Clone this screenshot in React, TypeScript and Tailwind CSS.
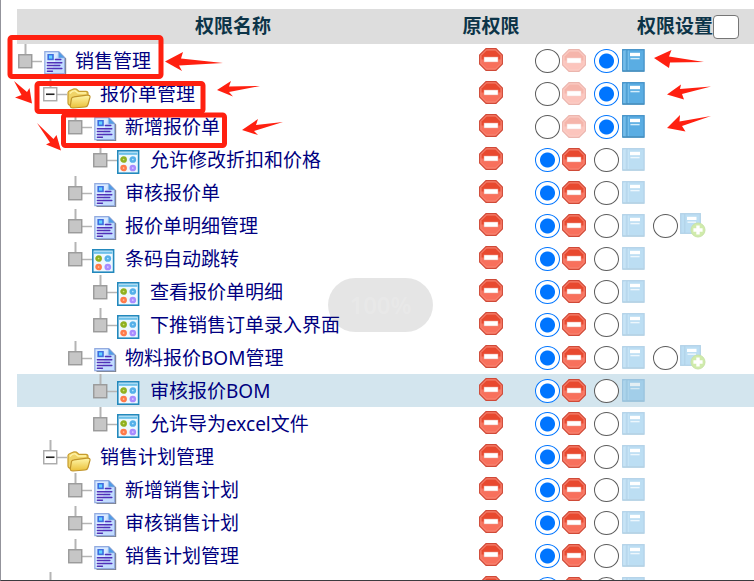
type IconKind = "doc" | "grid" | "folder";

type Permission = {
  id: number;
  level: 1 | 2 | 3 | 4;
  icon: IconKind;
  label: string;
  value: "deny" | "allow";
  canAdd?: boolean;
  active?: boolean;
};

const permissions: Permission[] = [
  { id: 1, level: 1, icon: "doc", label: "销售管理", value: "allow" },
  { id: 2, level: 2, icon: "folder", label: "报价单管理", value: "allow" },
  { id: 3, level: 3, icon: "doc", label: "新增报价单", value: "allow" },
  { id: 4, level: 4, icon: "grid", label: "允许修改折扣和价格", value: "deny" },
  { id: 5, level: 3, icon: "doc", label: "审核报价单", value: "deny" },
  { id: 6, level: 3, icon: "doc", label: "报价单明细管理", value: "deny", canAdd: true },
  { id: 7, level: 3, icon: "grid", label: "条码自动跳转", value: "deny" },
  { id: 8, level: 4, icon: "grid", label: "查看报价单明细", value: "deny" },
  { id: 9, level: 4, icon: "grid", label: "下推销售订单录入界面", value: "deny" },
  { id: 10, level: 3, icon: "doc", label: "物料报价BOM管理", value: "deny", canAdd: true },
  { id: 11, level: 4, icon: "grid", label: "审核报价BOM", value: "deny", active: true },
  { id: 12, level: 4, icon: "grid", label: "允许导为excel文件", value: "deny" },
  { id: 13, level: 2, icon: "folder", label: "销售计划管理", value: "deny" },
  { id: 14, level: 3, icon: "doc", label: "新增销售计划", value: "deny" },
  { id: 15, level: 3, icon: "doc", label: "审核销售计划", value: "deny" },
  { id: 16, level: 3, icon: "doc", label: "销售计划管理", value: "deny" },
  { id: 17, level: 2, icon: "folder", label: "", value: "deny" },
];

const indent = {
  1: "pl-0",
  2: "pl-[25px]",
  3: "pl-[50px]",
  4: "pl-[75px]",
};

const iconPadding = {
  doc: "pl-px pt-[7px]",
  grid: "pt-[7px]",
  folder: "pt-[11px]",
};

function Connector({ open }: { open: boolean }) {
  return (
    <svg width="25" height="33" viewBox="0 0 25 33" className="shrink-0">
      <path d="M8.5 0V10" stroke="#b4b4b4" strokeWidth="2" />
      <path d="M15 17.5H25" stroke="#b4b4b4" strokeWidth="1.5" />
      <rect
        x="1.75"
        y="10.75"
        width="13"
        height="13"
        fill={open ? "#ffffff" : "#c6c6c6"}
        stroke={open ? "#a9a9a9" : "#999999"}
        strokeWidth="1.4"
      />
      {open && <path d="M4 17.25H12.5" stroke="#222" strokeWidth="1.6" />}
    </svg>
  );
}

function DocIcon() {
  return (
    <svg width="24" height="24" viewBox="0 0 24 24">
      <path d="M3 1.5H17L23.2 7.5V24H3.5Z" fill="#7b7f88" />
      <path d="M1.8 .7H15.8L21.6 6.7V22.6H1.8Z" fill="#c2dcff" stroke="#93abe0" strokeWidth="1.2" />
      <path d="M2.8 1.7H15L8 22H2.8Z" fill="#e4f0ff" opacity=".7" />
      <path d="M15.8 1V6.7H21.4Z" fill="#4d9ce8" stroke="#7199d1" strokeWidth=".6" />
      <rect x="4.4" y="3" width="6.4" height="6.2" fill="#3d6de0" />
      <rect x="6" y="4.4" width="3.2" height="3.2" fill="#62d4ff" />
      <path
        d="M12.4 8.5H17.8M4.4 11.7H18.8M4.4 14.6H16.8M4.4 17.5H18.8M4.4 20.3H9.4"
        stroke="#5030b8"
        strokeWidth="1.5"
        strokeLinecap="round"
      />
    </svg>
  );
}

function GridIcon() {
  return (
    <svg width="23" height="24" viewBox="0 0 23 24">
      <rect x=".8" y=".8" width="20.8" height="22.4" fill="#edf8ff" stroke="#2389bd" strokeWidth="1.6" />
      <rect x="2" y="2" width="18.4" height="2.8" fill="#65bde9" />
      <path d="M2 2.6H20.4" stroke="#b9e4fa" strokeWidth=".9" />
      <g fill="none" strokeWidth="2.5">
        <circle cx="6.6" cy="9.5" r="2.1" stroke="#8fb020" fill="#d2e27c" />
        <circle cx="15.8" cy="9.5" r="2.1" stroke="#55b0e9" fill="#b9e4fd" />
        <circle cx="6.6" cy="18" r="2.1" stroke="#ff7a49" fill="#ffc9ae" />
        <circle cx="15.8" cy="18" r="2.1" stroke="#a98cff" fill="#dfd2ff" />
      </g>
    </svg>
  );
}

function FolderIcon() {
  return (
    <svg width="24" height="22" viewBox="0 0 24 22">
      <defs>
        <linearGradient id="folder" x1="0" y1="0" x2="0" y2="1">
          <stop offset="0" stopColor="#fff6a8" />
          <stop offset="1" stopColor="#eac038" />
        </linearGradient>
      </defs>
      <path
        d="M1 15V4.5Q1.2 3 3 2.5L6 1.2Q9 .4 10.5 2L12 3.4H19Q21 3.5 21 5.5V9L18 18H5Q1 17 1 15Z"
        fill="#f0d468"
        stroke="#c79c2c"
        strokeWidth="1.2"
      />
      <path d="M2.8 5.5Q5 2.6 8 2.6L11 5H19" fill="none" stroke="#fff3a6" strokeWidth="1.4" />
      <path
        d="M4.5 10.5Q4.8 9 7 8.8L20 7.2Q23.4 7 23 9.2L21 16.5Q20.4 18.8 18 19L6 20Q3 20 3.3 17.6Z"
        fill="url(#folder)"
        stroke="#c0942a"
        strokeWidth="1.2"
      />
    </svg>
  );
}

function StopIcon() {
  return (
    <svg width="24" height="23" viewBox="0 0 24 23" className="shrink-0">
      <path d="M7 .6H17L23.4 7V16L17 22.4H7L.6 16V7Z" fill="#f8705c" stroke="#cf4a38" strokeWidth="1.1" />
      <path d="M7.5 1.8H16.5L22.2 7.4V11.5H1.8V7.4Z" fill="#e8492f" />
      <path
        d="M7.5 2H16.5L22 7.5V15.5L16.5 21H7.5L2 15.5V7.5Z"
        fill="none"
        stroke="#f58a78"
        strokeWidth=".9"
      />
      <rect x="5" y="9" width="14" height="5" fill="#fff" stroke="#e99b8d" strokeWidth=".5" />
    </svg>
  );
}

function BookIcon() {
  return (
    <svg width="23" height="23" viewBox="0 0 23 23" className="shrink-0">
      <rect x=".7" y=".7" width="21.4" height="21.4" fill="#5aade3" stroke="#4593c8" strokeWidth="1.3" />
      <path d="M1.4 1.4H4.8V21.6H1.4Z" fill="#68b4e4" />
      <path d="M5 1V22" stroke="#3d8dc3" strokeWidth="1" />
      <path d="M6.2 1.5V21M2 2V21" stroke="#83c6ee" strokeWidth=".9" />
      <path d="M1 22H22" stroke="#4a8fbb" strokeWidth="1.2" />
      <rect x="8" y="3.8" width="10" height="3.4" fill="#fff" />
      <path d="M8.4 9.6H17.6" stroke="#d4edfb" strokeWidth="1.4" />
    </svg>
  );
}

function BookAddIcon() {
  return (
    <svg width="26" height="25" viewBox="0 0 26 25" className="shrink-0">
      <rect x=".7" y=".7" width="19.6" height="19.6" fill="#5aade3" stroke="#4593c8" strokeWidth="1.3" />
      <path d="M4.8 1V20" stroke="#3d8dc3" strokeWidth="1" />
      <rect x="7" y="3.8" width="9.5" height="3.2" fill="#fff" />
      <path d="M7.5 9.2H16" stroke="#d4edfb" strokeWidth="1.4" />
      <circle cx="18" cy="17" r="7" fill="#8bcf2f" stroke="#79ba28" />
      <path d="M18 12.4V21.6M13.4 17H22.6" stroke="#fff" strokeWidth="3.4" />
    </svg>
  );
}

function NodeIcon({ kind }: { kind: IconKind }) {
  if (kind === "doc") return <DocIcon />;
  if (kind === "grid") return <GridIcon />;
  return <FolderIcon />;
}

type OptionProps = {
  name: string;
  label: string;
  checked: boolean;
  children: React.ReactNode;
};

function Option({ name, label, checked, children }: OptionProps) {
  return (
    <label className="flex items-center gap-[2px]">
      <input
        type="radio"
        name={name}
        aria-label={label}
        defaultChecked={checked}
        className="h-6 w-[25px] shrink-0 appearance-none rounded-[50%] border border-[#5c5c5c] bg-white checked:border-[#0075ff] checked:bg-[radial-gradient(circle,#0075ff_7px,#ffffff_8px)]"
      />
      <span className={checked ? "" : "opacity-40"}>{children}</span>
    </label>
  );
}

function PermissionRow({ item }: { item: Permission }) {
  const name = `permission-${item.id}`;

  return (
    <tr className={item.active ? "bg-[#d3e5ee]" : ""}>
      <td className="p-0">
        <div className={`flex h-[33px] items-start ${indent[item.level]}`}>
          <Connector open={item.icon === "folder"} />
          <span className={`flex w-[33px] shrink-0 ${iconPadding[item.icon]}`}>
            <NodeIcon kind={item.icon} />
          </span>
          <a href="#" className="whitespace-nowrap text-[19px] leading-[35px] text-[#000080]">
            {item.label}
          </a>
        </div>
      </td>
      <td className="p-0">
        <div className="flex h-[33px] items-start justify-center pt-1">
          <StopIcon />
        </div>
      </td>
      <td className="p-0">
        <div className="flex h-[33px] items-center gap-2 pl-[2px]">
          <Option name={name} label="禁止" checked={item.value === "deny"}>
            <StopIcon />
          </Option>
          <Option name={name} label="允许" checked={item.value === "allow"}>
            <span className="block pl-px">
              <BookIcon />
            </span>
          </Option>
          {item.canAdd && (
            <Option name={name} label="新增" checked={false}>
              <BookAddIcon />
            </Option>
          )}
        </div>
      </td>
    </tr>
  );
}

function Annotations() {
  return (
    <svg width="754" height="160" viewBox="0 0 754 160" className="pointer-events-none absolute -left-px top-0">
      <g fill="none" stroke="#ff2010" strokeWidth="5">
        <rect x="10" y="37.5" width="151" height="39" rx="2" />
        <rect x="37" y="83.5" width="166" height="28" rx="2" />
        <rect x="63.5" y="115" width="161" height="30.5" rx="2" />
      </g>
      <g fill="#ff2010">
        <path d="M165 61.5L183 52L181 58.5L223 63L179 65.5L182 71Z" />
        <path d="M217 90L231 81L229 86.5L260 86L229 92L233 96.5Z" />
        <path d="M242 130L258 119L256 125L283 122L254 131L258 135Z" />
        <path d="M14 81L27 92L29.5 88L32 103.5L15 97.5L21.5 95Z" />
        <path d="M37 123L53.5 139L56.5 135L61 150.5L46 144.5L50 142.5Z" />
        <path d="M654 58L671.5 50L669 56.5L704 62L670 62.5L669 68Z" />
        <path d="M667 94.5L681 84.5L680 89L711 86.5L682 94L684 99.5Z" />
        <path d="M667 128L680 115L679.5 121.5L711 116L682 126L685.5 131.5Z" />
      </g>
    </svg>
  );
}

export default function App() {
  return (
    <main className="relative h-screen overflow-hidden border-b border-l border-b-[#3b3b3f] border-l-[#93939b] bg-white pl-4 pt-[9px] font-['Noto_Sans','Noto_Sans_CJK_SC',sans-serif]">
      <table className="w-full table-fixed border-collapse">
        <colgroup>
          <col />
          <col className="w-[84px]" />
          <col className="w-[221px]" />
        </colgroup>
        <thead>
          <tr className="h-[35px] bg-[#dddddd] text-[19px] leading-[35px] text-[#0c3448]">
            <th className="p-0 font-bold">权限名称</th>
            <th className="p-0 font-bold">原权限</th>
            <th className="p-0 pr-[15px] font-bold">
              <label className="flex h-[35px] items-center justify-end">
                权限设置
                <input
                  type="checkbox"
                  className="h-6 w-[26px] appearance-none rounded-[4px] border border-[#767676] bg-white"
                />
              </label>
            </th>
          </tr>
        </thead>
        <tbody>
          {permissions.map((item) => (
            <PermissionRow key={item.id} item={item} />
          ))}
        </tbody>
      </table>

      <Annotations />

      <div className="absolute left-[327px] top-[278px] flex h-[54px] w-[105px] items-center justify-center rounded-full bg-black/10 text-2xl font-semibold text-white/15">
        100%
      </div>
    </main>
  );
}
